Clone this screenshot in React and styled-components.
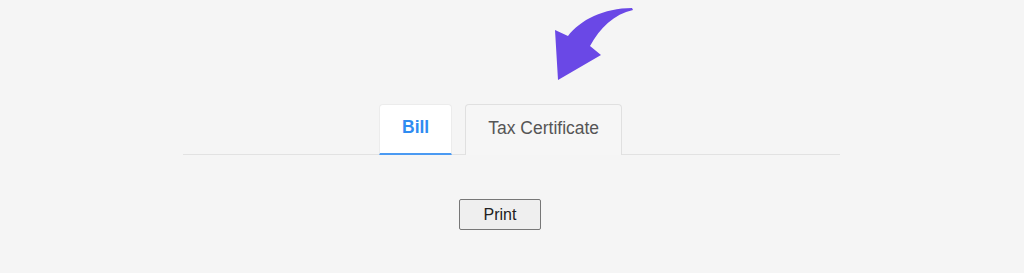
import React from 'react';
import styled, { createGlobalStyle } from 'styled-components';

const GlobalStyle = createGlobalStyle`
  html, body {
    margin: 0;
    padding: 0;
    background: #f5f5f5;
    font-family: "Liberation Sans", Arial, sans-serif;
  }
`;

const Page = styled.div`
  width: 1024px;
  height: 273px;
  background: #f5f5f5;
  overflow: hidden;
`;

const ArrowRow = styled.div`
  height: 104px;
  padding-left: 552px;
`;

const Panel = styled.div`
  width: 657px;
  margin-left: 183px;
`;

const TabBar = styled.div`
  display: flex;
  gap: 13px;
  padding-left: 196px;
  border-bottom: 1px solid #e2e2e2;
`;

const Tab = styled.div`
  height: 51px;
  box-sizing: border-box;
  padding: 0 22px 3px;
  display: flex;
  align-items: center;
  font-size: 17.5px;
  font-weight: ${(p) => (p.$active ? 700 : 400)};
  color: ${(p) => (p.$active ? '#2f8cf1' : '#555')};
  background: ${(p) => (p.$active ? '#fff' : '#f6f6f6')};
  border: 1px solid ${(p) => (p.$active ? '#ececec' : '#e0e0e0')};
  border-bottom: ${(p) => (p.$active ? '2px solid #4a9af2' : 'none')};
  border-radius: 4px 4px 0 0;
  margin-bottom: -1px;
`;

const Actions = styled.div`
  display: flex;
  justify-content: center;
  padding-top: 44px;
  padding-right: 23px;
`;

const PrintButton = styled.button`
  width: 82px;
  height: 31px;
  font-family: "Liberation Sans", Arial, sans-serif;
  font-size: 16px;
  color: #222;
  background: #efefef;
  border: 1px solid #777;
  border-radius: 2px;
  padding: 0;
`;

const Arrow = () => (
  <svg width="90" height="90" viewBox="552 0 90 90">
    <path
      d="M632 8 C604 8 580 20 568 36 L555 30 L558 80 L601 55 L590 46 C600 28 614 14 633 10 Z"
      fill="#6a48e6"
    />
  </svg>
);

export default function App() {
  return (
    <Page>
      <GlobalStyle />
      <ArrowRow>
        <Arrow />
      </ArrowRow>
      <Panel>
        <TabBar>
          <Tab $active>Bill</Tab>
          <Tab>Tax Certificate</Tab>
        </TabBar>
        <Actions>
          <PrintButton>Print</PrintButton>
        </Actions>
      </Panel>
    </Page>
  );
}
